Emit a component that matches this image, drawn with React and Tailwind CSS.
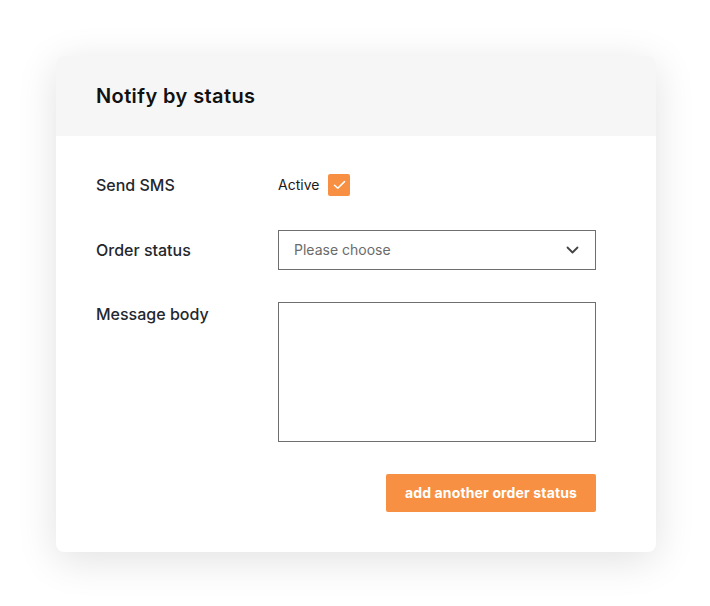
import { useState } from 'react';

function Row({ label, children, className = '' }) {
  return (
    <div className={`flex ${className}`}>
      <div className="w-[182px] shrink-0 text-base font-medium text-[#23272e]">{label}</div>
      <div className="flex-1">{children}</div>
    </div>
  );
}

export default function App() {
  const [active, setActive] = useState(true);

  return (
    <div className="min-h-screen bg-white p-14 font-['Inter',sans-serif]">
      <div className="w-[600px] overflow-hidden rounded-lg bg-white shadow-[0_8px_40px_rgba(0,0,0,0.12)]">
        <div className="flex h-20 items-center bg-[#f6f6f6] px-10">
          <h1 className="text-xl font-semibold tracking-[0.02em] text-[#111]">Notify by status</h1>
        </div>

        <div className="px-10 pb-10 pt-[37px]">
          <Row label="Send SMS" className="items-center">
            <div className="flex items-center gap-[9px]">
              <span className="text-sm text-[#1a1a1a]">Active</span>
              <button
                type="button"
                onClick={() => setActive(!active)}
                className="flex h-[22px] w-[22px] items-center justify-center rounded-[2px] bg-[#f79043]"
              >
                {active && (
                  <svg width="13" height="10" viewBox="0 0 13 10" fill="none">
                    <path d="M1.5 5.2 4.8 8.3 11.5 1.6" stroke="white" strokeWidth="1.5" strokeLinecap="round" strokeLinejoin="round" />
                  </svg>
                )}
              </button>
            </div>
          </Row>

          <Row label="Order status" className="mt-[33px] items-center">
            <div className="flex h-10 w-[318px] items-center justify-between border border-[#6e6e6e] pl-[15px] pr-4">
              <span className="text-sm text-[#6b6b6b]">Please choose</span>
              <svg width="13" height="8" viewBox="0 0 13 8" fill="none">
                <path d="M1.5 1.5 6.5 6.5 11.5 1.5" stroke="#444" strokeWidth="1.8" strokeLinecap="round" strokeLinejoin="round" />
              </svg>
            </div>
          </Row>

          <Row label="Message body" className="mt-8">
            <textarea className="block h-[140px] w-[318px] resize-none border border-[#6e6e6e] outline-none" />
          </Row>

          <div className="mt-8 flex justify-end pr-5">
            <button
              type="button"
              className="h-[38px] w-[210px] rounded-[2px] bg-[#f79043] text-sm font-bold tracking-[0.01em] text-white"
            >
              add another order status
            </button>
          </div>
        </div>
      </div>
    </div>
  );
}
